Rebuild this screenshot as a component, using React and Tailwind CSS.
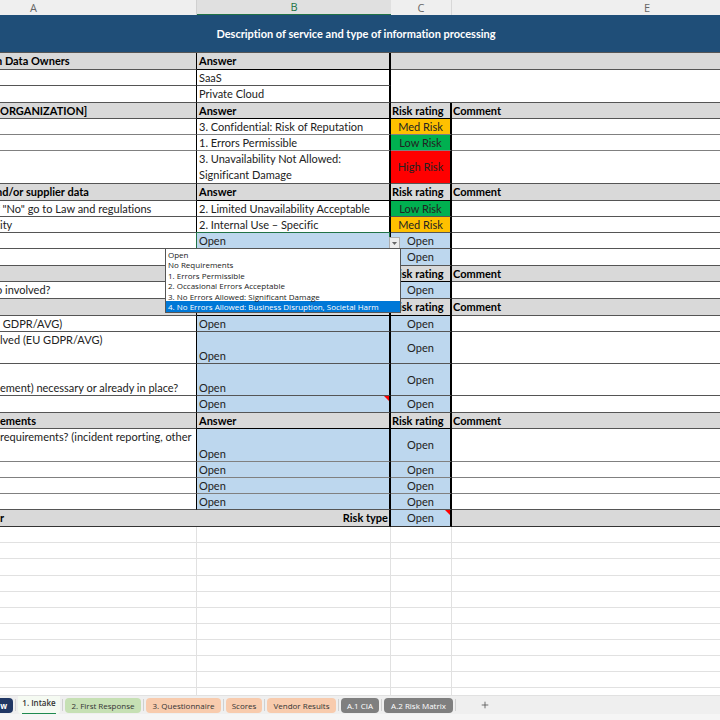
import React from 'react';
import clsx from 'clsx';
import { Plus } from 'lucide-react';

const FILLS = {
    med: 'bg-[#ffc000]',
    low: 'bg-[#00b050]',
    high: 'bg-[#ff0000]',
    open: 'bg-[#bdd7ee]',
};

const RATINGS = { med: 'Med Risk', low: 'Low Risk', high: 'High Risk', open: 'Open' };

// h = row height, a/b = text in columns A and B, risk = rating in column C
// cut = column A text that is scrolled partly out of view
const ROWS = [
    { h: 'h-[17px]', head: true, merged: true, a: 'n Data Owners', cut: true },
    { h: 'h-4', merged: true, b: 'SaaS', noLine: true },
    { h: 'h-[17px]', merged: true, b: 'Private Cloud' },
    { h: 'h-4', head: true, a: 'ORGANIZATION]' },
    { h: 'h-4', b: '3. Confidential: Risk of Reputation', risk: 'med', soft: true },
    { h: 'h-4', b: '1. Errors Permissible', risk: 'low', soft: true },
    { h: 'h-[33px]', b: '3. Unavailability Not Allowed: Significant Damage', risk: 'high' },
    { h: 'h-[17px]', head: true, a: 'nd/or supplier data', cut: true },
    { h: 'h-4', a: 'f "No" go to Law and regulations', cut: true, b: '2. Limited Unavailability Acceptable', risk: 'low' },
    { h: 'h-4', a: 'ity', b: '2. Internal Use – Specific', risk: 'med' },
    { h: 'h-4', b: 'Open', risk: 'open', selected: true },
    { h: 'h-[17px]', b: 'Open', risk: 'open' },
    { h: 'h-4', head: true },
    { h: 'h-[17px]', a: 'o involved?', cut: true, b: 'Open', risk: 'open' },
    { h: 'h-[17px]', head: true },
    { h: 'h-4', a: '\u00a0GDPR/AVG)', b: 'Open', risk: 'open' },
    { h: 'h-8', a: 'lved (EU GDPR/AVG)', top: true, b: 'Open', risk: 'open' },
    { h: 'h-8', a: 'ement) necessary or already in place?', bottom: true, b: 'Open', risk: 'open' },
    { h: 'h-[17px]', b: 'Open', risk: 'open', note: true },
    { h: 'h-4', head: true, a: 'ements' },
    { h: 'h-[33px]', a: 'requirements? (incident reporting, other', top: true, b: 'Open', risk: 'open', soft: true },
    { h: 'h-4', b: 'Open', risk: 'open', soft: true },
    { h: 'h-4', b: 'Open', risk: 'open', soft: true },
    { h: 'h-4', b: 'Open', risk: 'open' },
];

const EMPTY_ROWS = ['h-4', 'h-4', 'h-[17px]', 'h-4', 'h-4', 'h-4', 'h-4', 'h-4', 'h-4', 'h-4', 'h-2'];

const OPTIONS = [
    'Open',
    'No Requirements',
    '1. Errors Permissible',
    '2. Occasional Errors Acceptable',
    '3. No Errors Allowed: Significant Damage',
    '4. No Errors Allowed: Business Disruption, Societal Harm',
];

const TABS = [
    { label: '2. First Response', style: 'w-[76px] bg-[#c6e0b4] text-[#333]' },
    { label: '3. Questionnaire', style: 'w-[75px] bg-[#f8cbad] text-[#333]' },
    { label: 'Scores', style: 'w-[36px] bg-[#f8cbad] text-[#333]' },
    { label: 'Vendor Results', style: 'w-[69px] bg-[#f8cbad] text-[#333]' },
    { label: 'A.1 CIA', style: 'w-[38px] bg-[#7f7f7f] text-white' },
    { label: 'A.2 Risk Matrix', style: 'w-[69px] bg-[#7f7f7f] text-white' },
];

const NoteMark = () => (
    <svg viewBox="0 0 5 5" className="absolute top-0 right-0 size-[5px]" aria-hidden="true">
        <path d="M0 0H5V5Z" fill="#f00" />
    </svg>
);

const AnswerPicker = () => (
    <>
        <span className="absolute -inset-px border border-[#217346] pointer-events-none" />
        <button
            type="button"
            aria-label="Show answers"
            className="absolute top-1 left-full z-10 flex h-3 w-[11px] items-center justify-center border border-[#adadad] bg-[#ececec]"
        >
            <svg viewBox="0 0 5 3" className="h-[3px] w-[5px]" aria-hidden="true">
                <path d="M0 0H5L2.5 3Z" fill="#666" />
            </svg>
        </button>
        <select
            size={OPTIONS.length}
            aria-label="Answer"
            className="absolute top-full -left-8 z-20 h-[65px] w-[236px] appearance-none overflow-hidden border border-[#555] bg-white p-0 font-['Open_Sans',sans-serif] text-[8px] leading-[10px] text-[#222] outline-none"
        >
            {OPTIONS.map((option, i) => (
                <option
                    key={option}
                    className={clsx(
                        'block min-h-0 py-0 pr-0 pl-0.5 h-[10px] even:h-[11px]',
                        i === OPTIONS.length - 1 && 'bg-[#0078d7] text-white'
                    )}
                >
                    {option}
                </option>
            ))}
        </select>
    </>
);

const SheetRow = ({ row }) => {
    const line = row.soft ? 'border-b border-b-[#808080]' : 'border-b border-b-[#555]';
    const heavy = row.head ? 'border-b border-b-black' : line;
    const grey = row.head && 'bg-[#d9d9d9] font-bold text-black';
    const fill = row.risk === 'open' && FILLS.open;
    const tall = row.top || row.bottom;

    return (
        <tr className={row.h}>
            <td
                className={clsx(
                    'p-0 border-r border-r-black overflow-hidden whitespace-nowrap',
                    line,
                    grey,
                    row.top && 'align-top leading-4',
                    row.bottom && 'align-bottom',
                    !tall && 'align-middle'
                )}
            >
                {row.a && <div className={clsx(row.cut && '-ml-1')}>{row.a}</div>}
            </td>
            <td
                className={clsx(
                    'relative py-0 pr-0 pl-0.5 border-r-2 border-r-black',
                    heavy,
                    grey,
                    fill,
                    tall ? 'align-bottom' : 'align-middle',
                    row.risk === 'high' && 'leading-4'
                )}
            >
                {row.head ? 'Answer' : row.b}
                {row.selected && <AnswerPicker />}
                {row.note && <NoteMark />}
            </td>
            {row.merged ? (
                <td colSpan={2} className={clsx('p-0', grey, !row.noLine && line)} />
            ) : (
                <>
                    <td
                        className={clsx(
                            'p-0 border-r-2 border-r-black whitespace-nowrap',
                            heavy,
                            grey,
                            row.head ? 'pl-px text-left' : 'text-center',
                            row.risk && FILLS[row.risk]
                        )}
                    >
                        {row.head ? 'Risk rating' : RATINGS[row.risk]}
                    </td>
                    <td className={clsx('py-0 pr-0 pl-px', line, grey)}>{row.head && 'Comment'}</td>
                </>
            )}
        </tr>
    );
};

const Sheet = () => (
    <table className="w-full table-fixed border-separate border-spacing-0 text-[11px] leading-[14px] text-[#222] [font-variant-ligatures:none]">
        <colgroup>
            <col className="w-[197px]" />
            <col className="w-[194px]" />
            <col className="w-[61px]" />
            <col />
        </colgroup>
        <thead>
            <tr className="h-[15px] bg-[#efefef] font-['Open_Sans',sans-serif] text-[#666]">
                <th className="py-0 pr-0 pl-[30px] text-left font-normal border-r border-[#d0d0d0]">A</th>
                <th className="p-0 font-normal border-b border-b-[#217346] bg-[#e0e0e0] text-[#217346]">B</th>
                <th className="p-0 font-normal border-r border-[#d8d8d8]">C</th>
                <th className="py-0 pr-0 pl-48 text-left font-normal">E</th>
            </tr>
            <tr className="h-[38px]">
                <th colSpan={4} className="py-0 pl-0 pr-2 border-b border-b-[#555] bg-[#1f4e78] text-center font-bold text-white">
                    Description of service and type of information processing
                </th>
            </tr>
        </thead>
        <tbody>
            {ROWS.map((row, i) => (
                <SheetRow key={i} row={row} />
            ))}
            <tr className="h-[17px] bg-[#d9d9d9] font-bold text-black">
                <td className="p-0 border-b border-b-[#333]">r</td>
                <td className="py-0 pl-0 pr-px text-right border-r-2 border-r-black border-b border-b-[#333]">Risk type</td>
                <td className="relative p-0 text-center font-normal border-r-2 border-r-black border-b border-b-[#333] bg-[#bdd7ee] text-[#222]">
                    Open
                    <NoteMark />
                </td>
                <td className="p-0 border-b border-b-[#333]" />
            </tr>
            {EMPTY_ROWS.map((h, i) => (
                <tr key={i} className={h}>
                    <td className="p-0 border-r border-b border-[#e1e1e1]" />
                    <td className="p-0 border-r border-b border-[#e1e1e1]" />
                    <td className="p-0 border-r border-b border-[#e1e1e1]" />
                    <td className="p-0 border-b border-[#e1e1e1]" />
                </tr>
            ))}
        </tbody>
    </table>
);

const Divider = () => <span className="mx-0.5 h-3 w-px shrink-0 bg-[#d0d0d0]" />;

const TabBar = () => (
    <nav aria-label="Sheets" className="bg-[#f5f5f5] pb-1.5 font-['Open_Sans',sans-serif] text-[8px] leading-[15px]">
        <div className="flex h-[18px] items-center bg-[#efefef]">
            <button type="button" className="flex h-[15px] w-[13px] shrink-0 justify-end overflow-hidden rounded-r-sm bg-[#203764] pr-1.5 font-bold text-white">
                w
            </button>
            <Divider />
            <button type="button" aria-current="page" className="flex h-[18px] w-[42px] shrink-0 justify-center rounded-b-sm bg-[#f5faf2] font-semibold text-[#333]">
                <span className="border-b border-[#1e8a4f] leading-[14px] whitespace-nowrap">1. Intake</span>
            </button>
            <Divider />
            {TABS.map((tab) => (
                <React.Fragment key={tab.label}>
                    <button type="button" className={clsx('h-[15px] shrink-0 rounded-sm whitespace-nowrap', tab.style)}>
                        {tab.label}
                    </button>
                    <Divider />
                </React.Fragment>
            ))}
            <button type="button" aria-label="New sheet" className="ml-5 p-0.5 text-[#555]">
                <Plus size={10} strokeWidth={2} />
            </button>
        </div>
    </nav>
);

const App = () => {
    return (
        <div className="flex min-h-screen flex-col bg-white font-[Lato,Carlito,sans-serif]">
            <main className="flex-1 overflow-hidden">
                <Sheet />
            </main>
            <TabBar />
        </div>
    );
};

export default App;
